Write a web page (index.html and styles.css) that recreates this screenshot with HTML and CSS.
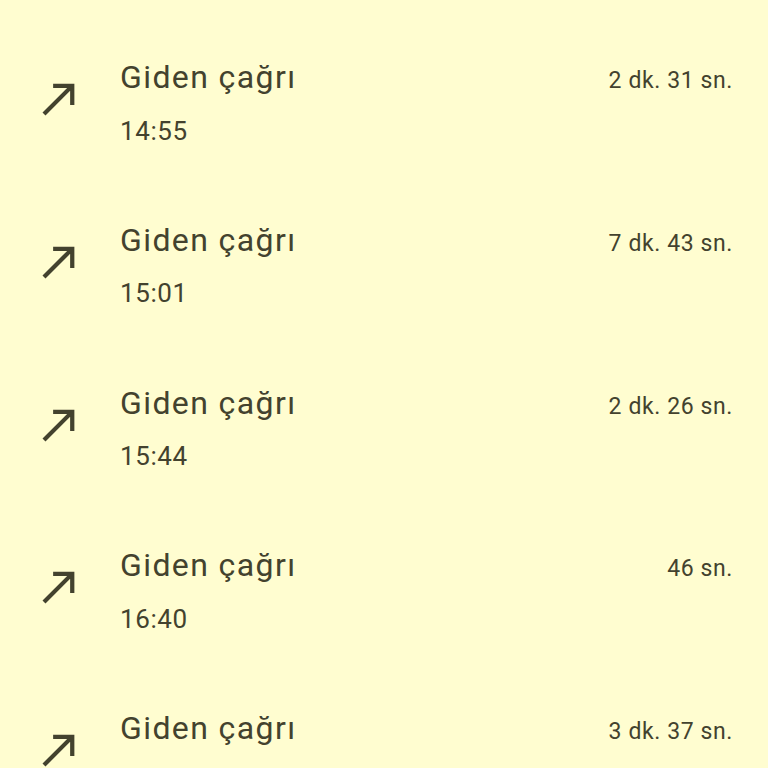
FILE: index.html
```html
<!DOCTYPE html>
<html lang="tr">
<head>
    <meta charset="UTF-8">
    <meta name="viewport" content="width=device-width, initial-scale=1.0">
    <title>Arama geçmişi</title>
    <link rel="stylesheet" href="styles.css">
</head>
<body>
    <div class="call-list">
        <div class="call-row">
            <svg class="call-icon" viewBox="0 0 24 24"><path d="M9 5v2h6.59L4 18.59 5.41 20 17 8.41V15h2V5z"/></svg>
            <div class="call-info">
                <div class="call-title">Giden çağrı</div>
                <div class="call-time">14:55</div>
            </div>
            <div class="call-duration">2 dk. 31 sn.</div>
        </div>
        <div class="call-row">
            <svg class="call-icon" viewBox="0 0 24 24"><path d="M9 5v2h6.59L4 18.59 5.41 20 17 8.41V15h2V5z"/></svg>
            <div class="call-info">
                <div class="call-title">Giden çağrı</div>
                <div class="call-time">15:01</div>
            </div>
            <div class="call-duration">7 dk. 43 sn.</div>
        </div>
        <div class="call-row">
            <svg class="call-icon" viewBox="0 0 24 24"><path d="M9 5v2h6.59L4 18.59 5.41 20 17 8.41V15h2V5z"/></svg>
            <div class="call-info">
                <div class="call-title">Giden çağrı</div>
                <div class="call-time">15:44</div>
            </div>
            <div class="call-duration">2 dk. 26 sn.</div>
        </div>
        <div class="call-row">
            <svg class="call-icon" viewBox="0 0 24 24"><path d="M9 5v2h6.59L4 18.59 5.41 20 17 8.41V15h2V5z"/></svg>
            <div class="call-info">
                <div class="call-title">Giden çağrı</div>
                <div class="call-time">16:40</div>
            </div>
            <div class="call-duration">46 sn.</div>
        </div>
        <div class="call-row">
            <svg class="call-icon" viewBox="0 0 24 24"><path d="M9 5v2h6.59L4 18.59 5.41 20 17 8.41V15h2V5z"/></svg>
            <div class="call-info">
                <div class="call-title">Giden çağrı</div>
                <div class="call-time">16:41</div>
            </div>
            <div class="call-duration">3 dk. 37 sn.</div>
        </div>
    </div>
</body>
</html>
```

FILE: styles.css
```css
body {
    margin: 0;
    padding: 0;
    background-color: #fffdd0;
    color: #43422e;
    font-family: Roboto, "Noto Sans", sans-serif;
    overflow: hidden;
    height: 768px;
}
.call-list {
    padding-top: 21px;
}
.call-row {
    display: flex;
    align-items: flex-start;
    height: 162.75px;
    box-sizing: border-box;
    padding: 38px 35px 0 34px;
}
.call-icon {
    width: 51px;
    height: 51px;
    margin-top: 14px;
    margin-right: 35px;
    fill: #43422e;
    flex-shrink: 0;
}
.call-info {
    flex: 1;
}
.call-title {
    font-size: 32px;
    line-height: 36px;
    letter-spacing: 1.4px;
    margin-bottom: 20.5px;
}
.call-time {
    font-size: 26px;
    line-height: 30px;
    letter-spacing: 0.6px;
}
.call-duration {
    font-size: 23px;
    line-height: 36px;
    letter-spacing: 0.6px;
    margin-top: 4px;
}
```
